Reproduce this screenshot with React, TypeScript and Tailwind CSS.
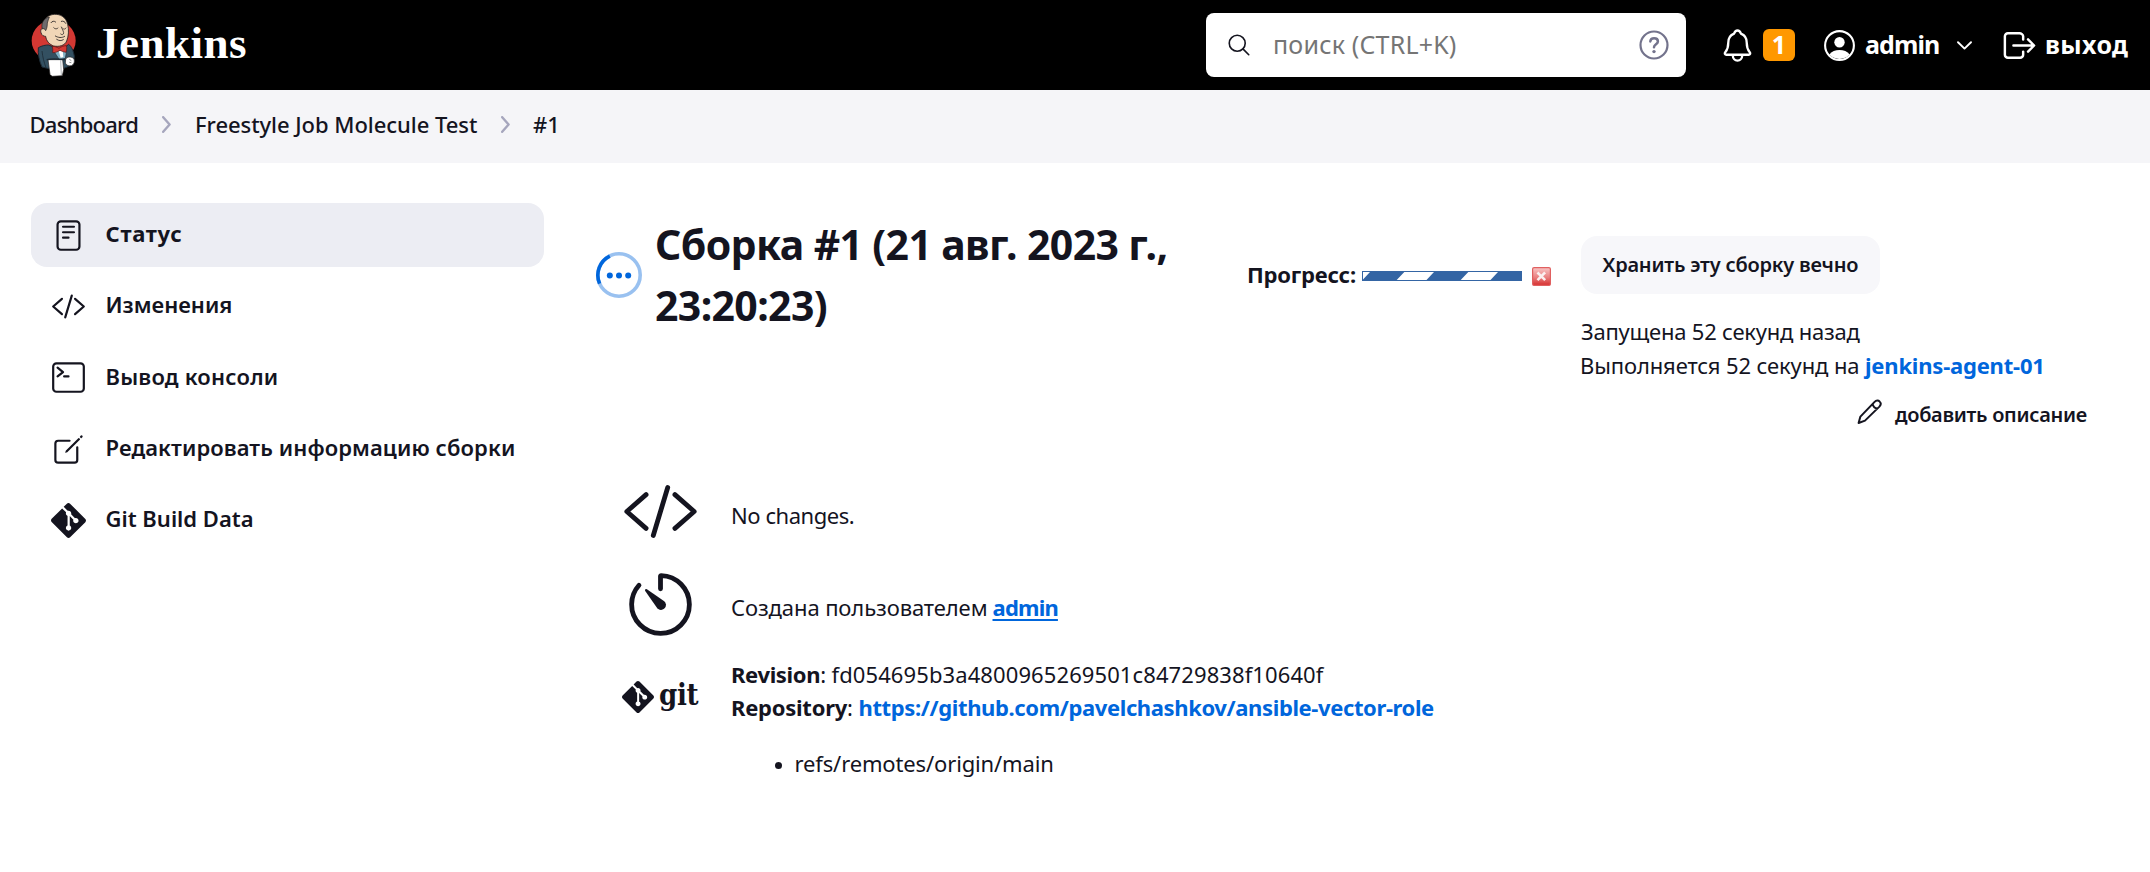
import type { ReactNode } from "react";
import {
  IoCodeSlashOutline,
  IoCreateOutline,
  IoLogOutOutline,
  IoNotificationsOutline,
  IoReaderOutline,
  IoSearchOutline,
  IoTerminalOutline,
  IoTimerOutline,
} from "react-icons/io5";
import { SiGit } from "react-icons/si";

function JenkinsLogo() {
  return (
    <svg width="46" height="64" viewBox="33 38 138 192" className="shrink-0">
      <ellipse cx="101" cy="121" rx="66" ry="62" fill="#d33833" />
      <path d="M55 142 C66 136 76 134 86 134 L124 150 L146 132 C154 138 160 150 163 168 L160 192 L132 204 L92 206 L66 200 C58 182 53 160 55 142Z" fill="#335061" stroke="#1d2b36" strokeWidth="3" />
      <path d="M66 152 C68 170 72 186 78 202" fill="none" stroke="#1d2b36" strokeWidth="2.5" />
      <path d="M76 84 C66 80 60 88 63 97 C65 105 71 108 77 108 C79 122 88 132 101 137 C118 140 134 136 140 122 C146 108 147 88 143 72 C138 50 121 41 103 42 C84 43 71 56 70 74Z" fill="#f0d6b7" stroke="#231f20" strokeWidth="2.5" />
      <path d="M88 50 C72 53 62 68 67 86 C71 84 74 85 77 91 C81 84 82 76 82 68 C84 61 86 55 88 50Z" fill="#6d6b6d" stroke="#231f20" strokeWidth="2" />
      <path d="M93 67 C96 62 103 61 107 65 M124 63 C130 61 135 64 137 69" fill="none" stroke="#231f20" strokeWidth="2.5" strokeLinecap="round" />
      <path d="M101 82 C105 87 111 87 114 83 M128 84 C131 88 136 87 138 83 M124 80 C128 90 133 96 130 101 C128 104 124 103 122 101" fill="none" stroke="#231f20" strokeWidth="2.2" strokeLinecap="round" />
      <path d="M106 107 C114 112 126 114 134 108 M110 117 C117 122 124 122 130 118" fill="none" stroke="#231f20" strokeWidth="2.5" strokeLinecap="round" />
      <path d="M101 152 L122 148 L140 152 L136 174 L118 178Z" fill="#81b0c4" stroke="#1d2b36" strokeWidth="2" />
      <path d="M116 152 L128 150 L130 170 L122 172Z" fill="#ffffff" />
      <path d="M97 138 C105 138 112 141 117 144 C123 139 132 136 139 136 C141 143 140 150 138 156 C131 155 125 153 120 150 C114 154 106 157 98 157 C99 150 98 144 97 138Z" fill="#d33833" stroke="#5a1412" strokeWidth="2" />
      <path d="M84 178 L128 178 L131 208 L127 226 L96 228 L90 222Z" fill="#ffffff" stroke="#231f20" strokeWidth="2" />
      <path d="M122 180 L124 224" stroke="#a5a9ad" strokeWidth="2.5" fill="none" />
      <path d="M80 178 C96 174 118 176 138 178" stroke="#1d2b36" strokeWidth="4" fill="none" />
      <path d="M137 176 C142 168 156 168 162 176 C165 184 162 193 154 196 C146 198 138 194 136 188Z" fill="#ffffff" stroke="#231f20" strokeWidth="2" />
      <path d="M148 177 L154 181 M148 186 L154 187" stroke="#4b4b4b" strokeWidth="1.8" fill="none" />
    </svg>
  );
}

function UserIcon() {
  return (
    <svg width="31" height="31" viewBox="0 0 31 31" className="ml-[29px] shrink-0">
      <circle cx="15.5" cy="15.5" r="14.4" fill="none" stroke="#fff" strokeWidth="2.1" />
      <circle cx="15.5" cy="12.2" r="5.2" fill="#fff" />
      <path d="M5.3 24.6 C7.6 21.4 11.4 20 15.5 20 S23.4 21.4 25.7 24.6 A14 14 0 0 1 5.3 24.6Z" fill="#fff" />
    </svg>
  );
}

function Separator() {
  return (
    <svg width="9" height="17" viewBox="0 0 9 17" className="shrink-0">
      <path d="M1.2 1.2 L7.6 8.5 L1.2 15.8" fill="none" stroke="#a6a6bd" strokeWidth="2.4" strokeLinecap="round" strokeLinejoin="round" />
    </svg>
  );
}

function PendingIcon() {
  return (
    <svg width="48" height="48" viewBox="0 0 48 48" className="mt-[1px] ml-px shrink-0">
      <circle cx="24" cy="24" r="21.2" fill="none" stroke="#99c1f0" strokeWidth="3.6" />
      <path d="M14.8 5.1 A21.2 21.2 0 0 0 4.6 32.6" fill="none" stroke="#0066dc" strokeWidth="3.6" />
      <circle cx="14.8" cy="24.5" r="3" fill="#0066dc" />
      <circle cx="24" cy="24.5" r="3" fill="#0066dc" />
      <circle cx="33.2" cy="24.5" r="3" fill="#0066dc" />
    </svg>
  );
}

function ProgressBar() {
  return (
    <svg width="160" height="10" viewBox="0 0 160 10" className="mt-[2px] shrink-0">
      <rect width="160" height="10" fill="#3465a4" />
      <path d="M1 1 H8 L1 8.5Z M42.3 1 H72 L64.5 9 H34.7Z M106.3 1 H136 L128.5 9 H98.7Z" fill="#fff" />
    </svg>
  );
}

function StopIcon() {
  return (
    <svg width="19" height="19" viewBox="0 0 19 19" className="mt-[3px] shrink-0">
      <defs>
        <linearGradient id="stop" x1="0" y1="0" x2="0" y2="1">
          <stop offset="0" stopColor="#f9c6c6" />
          <stop offset="0.55" stopColor="#e98080" />
          <stop offset="1" stopColor="#d62c2c" />
        </linearGradient>
      </defs>
      <rect x="0.6" y="0.6" width="17.8" height="17.8" rx="1.5" fill="url(#stop)" stroke="#e06060" strokeWidth="1.2" />
      <path d="M6.4 6.4 L12.2 12.2 M12.2 6.4 L6.4 12.2" stroke="#fbf0f0" strokeWidth="2.6" strokeLinecap="square" />
    </svg>
  );
}

function PencilIcon() {
  return (
    <svg width="25" height="26" viewBox="0 0 25 26" className="shrink-0">
      <path d="M1.6 24 L3.4 17.6 L17.6 2.9 C19.2 1.2 21.4 1.2 22.7 2.6 C24 3.9 23.9 6 22.4 7.6 L8 21.6 Z M15.6 5 C16.2 7.6 17.8 9.2 20.4 9.6" fill="none" stroke="#14141f" strokeWidth="2" strokeLinejoin="round" strokeLinecap="round" />
    </svg>
  );
}

function SideItem({ icon, active, children }: { icon: ReactNode; active?: boolean; children: ReactNode }) {
  return (
    <a className={"flex h-16 items-center rounded-2xl pl-5 whitespace-nowrap " + (active ? "bg-[#ecedf3] font-bold" : "font-semibold")}>
      {icon}
      <span className="ml-[19.5px] pb-[3px]">{children}</span>
    </a>
  );
}

export default function App() {
  return (
    <div className="min-h-[872px] w-[2150px] bg-white font-['Noto_Sans',sans-serif] text-[22px] leading-[33.4px] text-[#14141f]">
      <header className="flex h-[90px] items-center bg-black pl-[31px] text-white">
        <JenkinsLogo />
        <span className="ml-[19px] w-[1110px] pb-[4px] font-['Liberation_Serif',serif] text-[45px] leading-[50px] font-bold tracking-[0.5px]">Jenkins</span>
        <div className="flex h-16 w-[480px] shrink-0 items-center rounded-lg bg-white text-[#14141f]">
          <IoSearchOutline size={26} className="ml-[20px] shrink-0" />
          <span className="ml-[21px] w-[363px] pb-[1px] text-[25px] tracking-[0.2px] text-[#757575]">поиск (CTRL+K)</span>
          <svg width="30" height="30" viewBox="0 0 30 30" className="ml-[2.5px] shrink-0">
            <circle cx="15" cy="15" r="13.5" fill="none" stroke="#73738c" strokeWidth="2.2" />
            <path d="M11.3 11.4 C11.5 9.4 13 8.3 15.1 8.3 C17.3 8.3 18.9 9.6 18.9 11.5 C18.9 14.2 15 14.3 15 17.3" fill="none" stroke="#73738c" strokeWidth="2.5" strokeLinecap="round" />
            <circle cx="15" cy="21.6" r="1.7" fill="#73738c" />
          </svg>
        </div>
        <IoNotificationsOutline size={37} className="ml-[33px] shrink-0" />
        <span className="ml-[7px] flex h-8 w-8 shrink-0 items-center justify-center rounded-md bg-[#ff9800] pb-[1px] text-[25px] font-bold">1</span>
        <UserIcon />
        <span className="ml-[10px] w-[92px] shrink-0 pb-[1px] text-[25px] font-bold tracking-[-0.9px]">admin</span>
        <svg width="15" height="9" viewBox="0 0 15 9" className="shrink-0">
          <path d="M1 1.2 L7.5 7.6 L14 1.2" fill="none" stroke="#fff" strokeWidth="1.9" strokeLinecap="round" strokeLinejoin="round" />
        </svg>
        <IoLogOutOutline size={39} className="ml-[28px] shrink-0" />
        <span className="ml-[6px] pb-[1px] text-[25px] font-bold tracking-[0.4px] whitespace-nowrap">выход</span>
      </header>

      <nav className="flex h-[73px] items-center bg-[#f5f5f8] pb-[4px] pl-[28.5px] font-medium whitespace-nowrap">
        <span className="w-[133.5px] pl-px tracking-[-0.75px]">Dashboard</span>
        <Separator />
        <span className="ml-[24px] w-[306px] tracking-[-0.05px]">Freestyle Job Molecule Test</span>
        <Separator />
        <span className="ml-[23px]">#1</span>
      </nav>

      <div className="flex">
        <aside className="mt-[40px] ml-[31px] flex w-[513px] shrink-0 flex-col gap-[7.4px]">
          <SideItem active icon={<IoReaderOutline size={35} />}><span className="tracking-[0.7px]">Статус</span></SideItem>
          <SideItem icon={<IoCodeSlashOutline size={35} />}><span>Изменения</span></SideItem>
          <SideItem icon={<IoTerminalOutline size={35} />}><span className="tracking-[0.2px]">Вывод консоли</span></SideItem>
          <SideItem icon={<IoCreateOutline size={35} />}><span className="tracking-[0.09px]">Редактировать информацию сборки</span></SideItem>
          <SideItem icon={<SiGit size={35} />}><span>Git Build Data</span></SideItem>
        </aside>

        <main className="mt-[50px] ml-[50px] w-[987px] shrink-0">
          <div className="flex items-center">
            <PendingIcon />
            <h1 className="ml-[12px] w-[592px] shrink-0 pt-px text-[41px] leading-[61px] font-bold tracking-[-0.63px]">
              Сборка #1 (21 авг. 2023 г.,<br />23:20:23)
            </h1>
            <span className="w-[115px] font-bold tracking-[-0.2px]">Прогресс:</span>
            <ProgressBar />
            <span className="w-[10px]" />
            <StopIcon />
          </div>

          <div className="mt-[137px] ml-[28px] grid grid-cols-[77px_1fr] gap-x-[32px] gap-y-4">
            <IoCodeSlashOutline size={77} />
            <div className="flex items-center pt-[8px] tracking-[-0.45px]">No changes.</div>
            <IoTimerOutline size={77} />
            <div className="flex items-center pt-[6px]">
              <span className="w-[261.5px] tracking-[-0.1px]">Создана пользователем</span>
              <a className="font-bold tracking-[-0.8px] text-[#0066dc] underline decoration-2 underline-offset-[3px]">admin</a>
            </div>
            <div className="flex h-[33px] items-center self-start pt-[38px]">
              <SiGit size={32} className="shrink-0" />
              <span className="ml-[5px] pb-[4px] font-['DejaVu_Serif_Condensed','DejaVu_Serif',serif] text-[29px] leading-[30px] font-bold tracking-[-0.3px]">git</span>
            </div>
            <div className="-mt-px whitespace-nowrap">
              <div className="flex">
                <span className="w-[100.5px]"><b className="tracking-[-0.35px]">Revision</b>:</span>
                <span className="tracking-[0.1px]">fd054695b3a4800965269501c84729838f10640f</span>
              </div>
              <div className="flex">
                <span className="w-[127.5px]"><b className="tracking-[-0.25px]">Repository</b>:</span>
                <a className="font-bold tracking-[-0.38px] text-[#0066dc]">https://github.com/pavelchashkov/ansible-vector-role</a>
              </div>
              <div className="mt-[22px] flex items-center">
                <span className="mt-[3px] mr-[12.5px] ml-[44px] h-[7px] w-[7px] rounded-full bg-[#14141f]" />
                <span className="tracking-[-0.14px]">refs/remotes/origin/main</span>
              </div>
            </div>
          </div>
        </main>

        <section className="mt-[73px] w-[506px] shrink-0 whitespace-nowrap">
          <button className="flex h-[58px] w-[299px] items-center justify-center rounded-2xl bg-[#f7f7fa] pb-[1px] text-[20px] font-semibold tracking-[-0.2px]">Хранить эту сборку вечно</button>
          <div className="mt-[20.5px] tracking-[-0.22px]">Запущена 52 секунд назад</div>
          <div className="mt-[0.6px] flex">
            <span className="w-[285px] -ml-px tracking-[-0.12px]">Выполняется 52 секунд на</span>
            <a className="font-bold tracking-[-0.2px] text-[#0066dc]">jenkins-agent-01</a>
          </div>
          <div className="mt-[9.4px] flex items-center pl-[276px]">
            <PencilIcon />
            <span className="ml-[13px] pt-[7px] text-[20px] font-semibold tracking-[-0.3px]">добавить описание</span>
          </div>
        </section>
      </div>
    </div>
  );
}
